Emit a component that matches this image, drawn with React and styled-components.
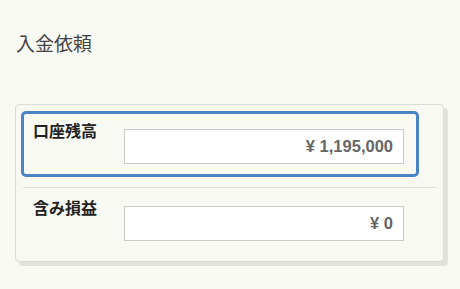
import React from "react"
import styled, { createGlobalStyle } from "styled-components"

const GlobalStyle = createGlobalStyle`
  html, body {
    margin: 0;
    padding: 0;
    background: #f9f9f3;
  }
  body {
    font-family: "Liberation Sans", "Noto Sans CJK JP", sans-serif;
    color: #333;
  }
`

const Page = styled.div`
  width: 460px;
  height: 289px;
  padding: 32px 15px 0 15px;
  box-sizing: border-box;
`

const Title = styled.h1`
  margin: 0 0 0 1px;
  font-size: 19px;
  font-weight: normal;
  line-height: 25px;
  color: #444;
`

const Card = styled.div`
  margin-top: 47px;
  width: 429px;
  box-sizing: border-box;
  border: 1px solid #dcdcd6;
  border-radius: 4px;
  background: #f9f9f3;
  box-shadow: 4px 4px 0 #e2e2dc;
  padding: 6px 6px 7px 5px;
`

const Row = styled.div`
  width: 398px;
  box-sizing: border-box;
  display: grid;
  grid-template-columns: 91px 280px;
  align-items: start;
  padding: 8px 12px 10px 9px;
  border: 3px solid ${(p) => (p.$active ? "#4a84c4" : "transparent")};
  border-radius: 5px;
`

const Label = styled.div`
  font-size: 16px;
  font-weight: bold;
  line-height: 20px;
  color: #222;
`

const Amount = styled.div`
  margin-top: 7px;
  height: 35px;
  box-sizing: border-box;
  border: 1px solid #cacac6;
  background: #fff;
  display: flex;
  align-items: center;
  justify-content: flex-end;
  padding-right: 10px;
  font-size: 16.5px;
  font-weight: bold;
  color: #666;
`

const Divider = styled.hr`
  margin: 10px 0 0 2px;
  border: 0;
  border-top: 1px solid #dededa;
`

const rows = [
  { label: "口座残高", value: "¥ 1,195,000", active: true },
  { label: "含み損益", value: "¥ 0" },
]

export default function App() {
  return (
    <>
      <GlobalStyle />
      <Page>
        <Title>入金依頼</Title>
        <Card>
          {rows.map((r, i) => (
            <React.Fragment key={r.label}>
              {i > 0 && <Divider />}
              <Row $active={r.active}>
                <Label>{r.label}</Label>
                <Amount>{r.value}</Amount>
              </Row>
            </React.Fragment>
          ))}
        </Card>
      </Page>
    </>
  )
}
